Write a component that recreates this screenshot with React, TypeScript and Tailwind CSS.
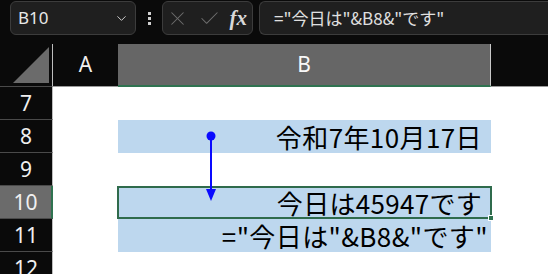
import { ChevronDown, X, Check } from 'lucide-react'

const jp = { fontFamily: '"Noto Sans CJK JP", "Noto Sans", sans-serif' }
const ui = { fontFamily: '"Segoe UI", "Noto Sans", "Open Sans", sans-serif' }

function RowHead({ n, active }: { n: number; active?: boolean }) {
  return (
    <div
      className={`h-[33px] flex items-center justify-center border-b border-[#4a4a4a] text-[21px] leading-none text-[#f0f0f0] ${
        active ? 'bg-[#6b6b6b] border-r-2 border-r-[#2f7350]' : 'bg-[#0a0a0a] border-r border-r-[#bdbdbd]'
      }`}
      style={ui}
    >
      {n}
    </div>
  )
}

export default function App() {
  return (
    <div className="w-[548px] h-[274px] overflow-hidden bg-white relative">
      {/* formula bar */}
      <div className="h-[44px] bg-[#0a0a0a] flex items-start pt-[1px] pl-[10px] gap-0">
        <div className="w-[126px] h-[34px] rounded-md bg-[#1f1f1f] border border-[#3c3c3c] flex items-center pl-[7px] pr-[6px] justify-between">
          <span className="text-[17px] text-[#e8e8e8]" style={ui}>B10</span>
          <ChevronDown size={15} color="#d8d8d8" strokeWidth={1.5} />
        </div>
        <div className="w-[26px] h-[34px] flex flex-col items-center justify-center gap-[2px]">
          <span className="w-[3px] h-[3px] bg-[#d0d0d0]" />
          <span className="w-[3px] h-[3px] bg-[#d0d0d0]" />
          <span className="w-[3px] h-[3px] bg-[#d0d0d0]" />
        </div>
        <div className="w-[91px] h-[34px] rounded-md bg-[#1f1f1f] border border-[#3c3c3c] flex items-center pl-[3px] pr-[5px] justify-between">
          <X size={23} color="#6e6e6e" strokeWidth={1.1} />
          <Check size={23} color="#6e6e6e" strokeWidth={1.1} />
          <span className="text-[21px] italic font-bold text-[#d8d8d8] leading-none" style={{ fontFamily: '"Liberation Serif", serif' }}>
            fx
          </span>
        </div>
        <div className="ml-[6px] flex-1 h-[34px] rounded-l-md bg-[#1f1f1f] border border-r-0 border-[#3c3c3c] flex items-center pl-[14px]">
          <span className="text-[17px] text-[#e0e0e0]" style={jp}>="今日は"&amp;B8&amp;"です"</span>
        </div>
      </div>

      {/* sheet */}
      <div className="grid grid-cols-[53px_65px_373px_1fr]">
        {/* header row */}
        <div className="h-[43px] bg-[#0a0a0a] border-r border-[#bdbdbd] border-b border-b-[#4a4a4a] flex items-end justify-end pr-[3px] pb-[3px]">
          <div className="w-[36px] h-[36px] bg-[#6b6b6b] [clip-path:polygon(100%_0,100%_100%,0_100%)]" />
        </div>
        <div className="h-[43px] bg-[#0a0a0a] border-b border-[#9a9a9a] flex items-center justify-center text-[21px] text-[#f0f0f0]" style={ui}>
          A
        </div>
        <div className="h-[43px] bg-[#666666] border-r border-r-[#c8c8c8] border-b-2 border-b-[#2f7350] flex items-center justify-center text-[21px] text-[#f8f8f8]" style={ui}>
          B
        </div>
        <div className="h-[43px] bg-[#0a0a0a] border-b border-[#9a9a9a]" />

        {/* row 7 */}
        <RowHead n={7} />
        <div />
        <div />
        <div />

        {/* row 8 */}
        <RowHead n={8} />
        <div />
        <div className="h-[33px] bg-[#bdd7ee] flex items-center justify-end pr-[9px] text-[26px] tracking-[0.4px] text-black leading-none" style={jp}>
          令和7年10月17日
        </div>
        <div />

        {/* row 9 */}
        <RowHead n={9} />
        <div />
        <div />
        <div />

        {/* row 10 */}
        <RowHead n={10} active />
        <div />
        <div className="relative h-[33px] bg-[#bdd7ee] border-2 border-[#2f6b4c] -ml-[1px] -mr-[1px] flex items-center justify-end pr-[8px] text-[26px] tracking-[0.3px] text-black leading-none" style={jp}>
          今日は45947です
          <span className="absolute -right-[4px] -bottom-[4px] w-[6px] h-[6px] bg-[#2f7350] border border-white" />
        </div>
        <div />

        {/* row 11 */}
        <RowHead n={11} />
        <div />
        <div className="h-[33px] bg-[#bdd7ee] flex items-center justify-end pr-[3px] text-[26px] tracking-[0.4px] text-black leading-none" style={jp}>
          ="今日は"&amp;B8&amp;"です"
        </div>
        <div />

        {/* row 12 */}
        <RowHead n={12} />
        <div />
        <div />
        <div />
      </div>

      {/* precedent arrow */}
      <svg className="absolute left-0 top-0 pointer-events-none" width="548" height="274">
        <circle cx="211" cy="136" r="4.5" fill="#0a0aff" />
        <line x1="211" y1="136" x2="211" y2="192" stroke="#0a0aff" strokeWidth="2" />
        <polygon points="206,189 216,189 211,201" fill="#0a0aff" />
      </svg>
    </div>
  )
}
